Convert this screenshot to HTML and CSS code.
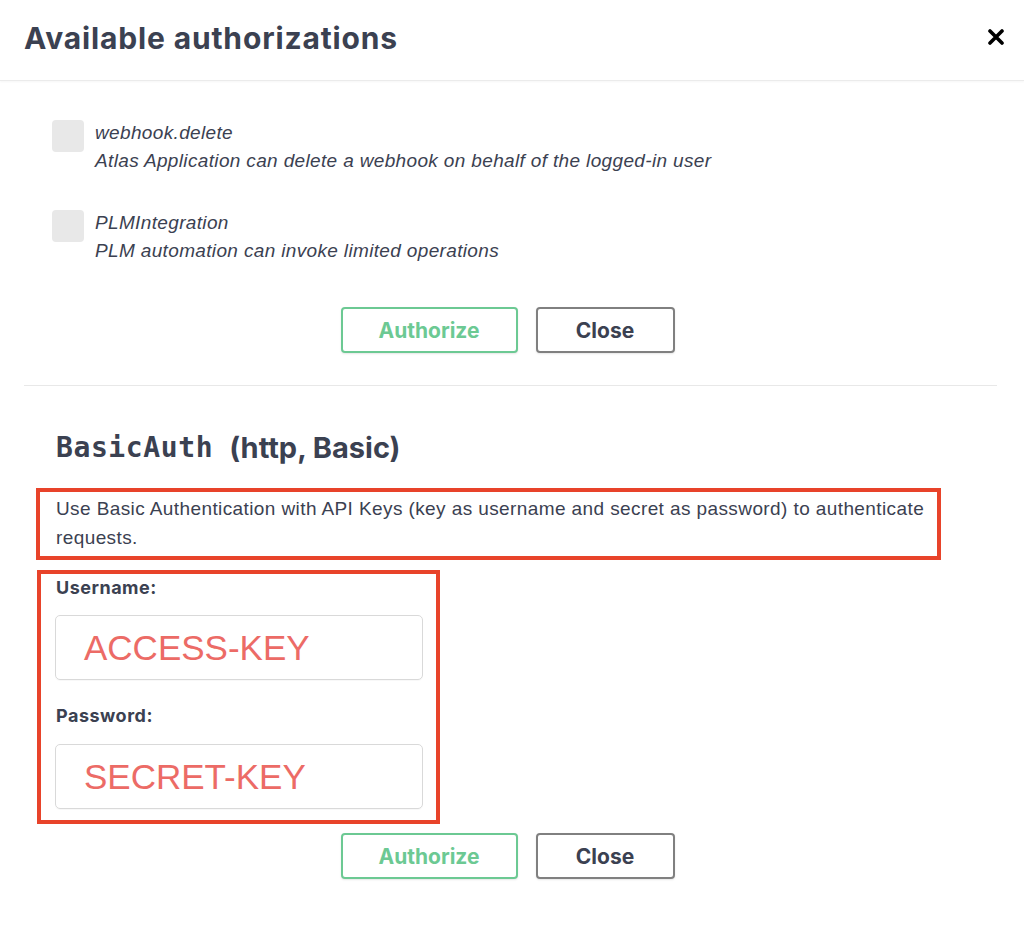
FILE: index.html
```html
<!DOCTYPE html>
<html lang="en">
<head>
<meta charset="utf-8">
<title>Available authorizations</title>
<link rel="stylesheet" href="styles.css">
</head>
<body>
<div class="modal">
  <header class="modal-header">
    <h3 class="modal-title">Available authorizations</h3>
    <button class="close-x" aria-label="Close">
      <svg width="16" height="16" viewBox="0 0 16 16"><path d="M2 2 L14 14 M14 2 L2 14" stroke="#000" stroke-width="3.6" stroke-linecap="round" fill="none"/></svg>
    </button>
  </header>
  <div class="modal-body">
    <section class="auth-container first">
      <ul class="scopes">
        <li class="scope">
          <span class="checkbox"></span>
          <div class="scope-text">
            <div class="scope-name">webhook.read</div>
            <div class="scope-desc">Atlas Application can read webhooks on behalf of the logged-in user</div>
          </div>
        </li>
        <li class="scope">
          <span class="checkbox"></span>
          <div class="scope-text">
            <div class="scope-name">webhook.delete</div>
            <div class="scope-desc">Atlas Application can delete a webhook on behalf of the logged-in user</div>
          </div>
        </li>
        <li class="scope">
          <span class="checkbox"></span>
          <div class="scope-text">
            <div class="scope-name">PLMIntegration</div>
            <div class="scope-desc">PLM automation can invoke limited operations</div>
          </div>
        </li>
      </ul>
      <div class="btn-row top">
        <button class="btn authorize">Authorize</button>
        <button class="btn close">Close</button>
      </div>
    </section>
    <section class="auth-container second">
      <h4 class="scheme-title"><code>BasicAuth</code> <span>(http, Basic)</span></h4>
      <div class="desc-box">Use Basic Authentication with API Keys (key as username and secret as password) to authenticate requests.</div>
      <div class="fields-box">
        <label class="field-label">Username:</label>
        <div class="field-input">ACCESS-KEY</div>
        <label class="field-label pw">Password:</label>
        <div class="field-input">SECRET-KEY</div>
      </div>
      <div class="btn-row bottom">
        <button class="btn authorize">Authorize</button>
        <button class="btn close">Close</button>
      </div>
    </section>
  </div>
</div>
</body>
</html>
```
FILE: styles.css
```css
* { box-sizing: border-box; }
html, body { margin: 0; padding: 0; background: #fff; }
body {
  width: 1024px;
  height: 930px;
  overflow: hidden;
  font-family: "Liberation Sans", Arial, sans-serif;
  color: #3b4151;
}
.modal { display: flex; flex-direction: column; height: 930px; }
.modal-header {
  height: 81px;
  flex: none;
  display: flex;
  align-items: center;
  justify-content: space-between;
  padding: 0 20px 0 24px;
  border-bottom: 1px solid #ebebeb;
  box-shadow: 0 1px 2px rgba(0,0,0,0.04);
  position: relative;
  z-index: 2;
  background: #fff;
}
.modal-title {
  margin: 0;
  font-family: Inter, "Liberation Sans", sans-serif;
  font-weight: 700;
  font-size: 30px;
  letter-spacing: 0.85px;
  color: #3b4151;
  padding-bottom: 4px;
}
.close-x {
  border: 0;
  background: none;
  padding: 0;
  width: 16px;
  height: 16px;
  margin-bottom: 6px;
  display: flex;
}
.modal-body { flex: 1; overflow: hidden; padding: 0 27px 0 24px; }
.auth-container.first { border-bottom: 1px solid #e8e8e8; padding-bottom: 32px; }
.scopes { list-style: none; margin: -52px 0 0; padding: 0 0 0 28px; display: flex; flex-direction: column; gap: 34px; }
.scope { display: flex; gap: 11px; align-items: flex-start; }
.checkbox {
  width: 32px; height: 32px; border-radius: 4px; background: #e8e8e8;
  flex: none; margin-top: 1px;
}
.scope-text { font-style: italic; font-size: 19px; letter-spacing: 0.35px; line-height: 28px; color: #3b4151; }
.btn-row { display: flex; justify-content: center; gap: 18px; padding-right: 6px; }
.btn-row.top { margin-top: 42px; }
.btn-row.bottom { margin-top: 9px; }
.btn {
  height: 46px;
  border-radius: 4px;
  background: #fff;
  font-family: Inter, "Liberation Sans", sans-serif;
  font-weight: 700;
  font-size: 21px;
  box-shadow: 0 1px 2px rgba(0,0,0,0.1);
  padding: 0;
}
.btn.authorize { width: 177px; border: 2px solid #6cc993; color: #6cc993; }
.btn.close { width: 139px; border: 2px solid #808080; color: #3b4151; }
.auth-container.second { padding: 0; }
.scheme-title {
  margin: 44px 0 0 32px;
  height: 36px;
  line-height: 36px;
  font-size: 28px;
  font-weight: 700;
  color: #3b4151;
  display: flex;
  align-items: center;
  gap: 16px;
}
.scheme-title code { font-family: "DejaVu Sans Mono", monospace; font-weight: 700; font-size: 28px; letter-spacing: 0.6px; }
.scheme-title span { font-family: Inter, "Liberation Sans", sans-serif; font-size: 29px; }
.desc-box {
  margin: 22px 0 0 12px;
  width: 905px;
  border: 4px solid #e8432a;
  padding: 2px 10px 4px 16px;
  font-size: 19px;
  letter-spacing: 0.4px;
  line-height: 29px;
  color: #3b4151;
}
.fields-box {
  margin: 10px 0 0 13px;
  width: 403px;
  border: 4px solid #e8432a;
  padding: 3px 13px 11px 14px;
  display: flex;
  flex-direction: column;
}
.field-label {
  font-family: Inter, "Liberation Sans", sans-serif;
  font-weight: 700;
  font-size: 18px;
  letter-spacing: 0.5px;
  line-height: 22px;
  padding-left: 1px;
  color: #3b4151;
}
.field-label.pw { margin-top: 25px; }
.field-input {
  margin-top: 16px;
  height: 65px;
  border: 1px solid #d9d9d9;
  border-radius: 5px;
  padding: 0 0 0 28px;
  display: flex;
  align-items: center;
  font-size: 35px;
  color: #ec6b66;
  box-shadow: 0 1px 1px rgba(0,0,0,0.03);
}
.field-label.pw + .field-input { margin-top: 17px; }
```
